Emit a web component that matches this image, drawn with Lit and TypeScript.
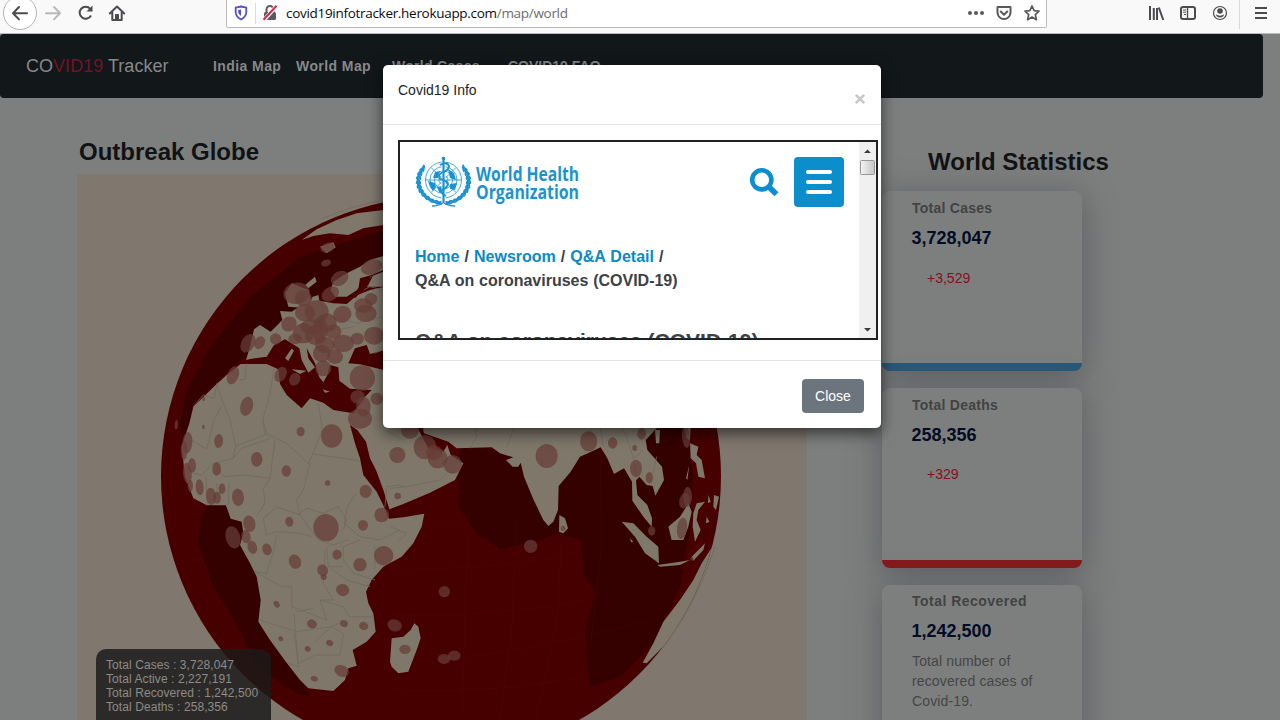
import { LitElement, html, css, svg } from "lit";
import { customElement } from "lit/decorators.js";

// Infection bubbles: cx, cy, rx, ry, rotation
const bubbles: number[][] = [
  [773, 353, 22, 14, -20], [768, 399, 15, 10, -20], [905, 411, 33, 22, -20], [809, 445, 28, 21, -30],
  [680, 490, 40, 32, -10], [700, 505, 26, 24, 0], [781, 492, 28, 20, -30], [657, 582, 24, 22, -40],
  [534, 640, 20, 30, 30], [569, 638, 15, 20, 30], [617, 627, 17, 17, 0], [489, 736, 17, 28, 20],
  [740, 545, 36, 34, 0], [705, 548, 30, 26, 0], [770, 578, 30, 28, 0], [817, 553, 28, 25, -20],
  [700, 610, 32, 30, 0], [735, 615, 30, 30, 0], [790, 605, 24, 22, 0], [888, 550, 32, 26, 0],
  [903, 507, 19, 18, 0], [880, 527, 28, 22, 0], [765, 645, 30, 24, 0], [755, 670, 26, 26, 0],
  [795, 680, 24, 22, 0], [760, 715, 24, 24, 0], [820, 640, 32, 26, 0], [862, 626, 20, 18, 0],
  [912, 617, 30, 27, 0], [750, 600, 22, 40, 0], [725, 590, 34, 22, 0], [675, 627, 20, 16, 0], [632, 733, 17, 24, 30],
  [674, 748, 16, 20, 30], [877, 744, 38, 38, 0], [530, 829, 19, 29, 15], [863, 801, 22, 20, 0],
  [920, 806, 19, 18, 0], [880, 830, 22, 30, 0], [870, 866, 36, 30, 0], [401, 807, 4, 7, 0], [400, 891, 4, 7, 0],
  [319, 884, 5, 14, 5], [785, 918, 32, 35, 0], [692, 905, 12, 14, 0], [446, 933, 13, 21, 5],
  [560, 988, 17, 22, 0], [649, 1023, 14, 17, 0], [773, 1059, 8, 8, 0], [352, 938, 15, 32, 5], [342, 962, 10, 28, 0],
  [440, 1017, 13, 20, 0], [366, 1007, 12, 22, 0], [352, 1030, 13, 32, -5], [361, 1068, 8, 18, 0], [389, 1072, 12, 24, -5],
  [423, 1099, 15, 26, -5], [441, 1103, 12, 18, 0], [456, 1076, 10, 16, 0], [504, 1102, 18, 26, -5],
  [887, 1084, 18, 20, 0], [935, 1155, 22, 22, 0], [538, 1181, 18, 25, -10],
  [658, 1175, 12, 15, -10], [768, 1193, 38, 41, -10], [879, 1186, 15, 16, 0], [489, 1222, 22, 34, -15],
  [528, 1220, 14, 20, -10], [547, 1252, 14, 20, -15], [591, 1258, 14, 18, -15], [675, 1295, 18, 22, -25],
  [801, 1274, 14, 15, -10], [870, 1304, 20, 20, 0], [941, 1277, 29, 29, 0], [758, 1321, 16, 18, -20],
  [761, 1341, 9, 9, 0], [818, 1380, 20, 18, 20], [620, 1423, 8, 11, -35], [726, 1482, 15, 13, 30],
  [822, 1481, 12, 10, 20], [881, 1488, 14, 12, 20], [632, 1526, 8, 7, 40], [713, 1557, 9, 8, 30],
  [779, 1539, 11, 9, 20], [815, 1623, 23, 17, 25], [733, 1646, 11, 8, 20],
  [974, 1486, 22, 18, 20], [1005, 1558, 17, 14, 0], [1123, 1385, 17, 17, 0], [1122, 1587, 19, 15, 0],
  [1153, 1577, 19, 15, 0], [1382, 1249, 20, 20, 0], [982, 975, 24, 24, 0], [983, 1098, 10, 10, 0],
  [1020, 900, 27, 26, 0], [1065, 952, 34, 36, 0], [1103, 985, 30, 30, 0], [1148, 1003, 28, 28, 0],
  [1092, 968, 24, 22, 0], [1430, 978, 33, 36, 0], [1556, 934, 26, 30, 0], [1628, 939, 14, 17, 0],
  [1715, 911, 13, 18, 0], [1694, 954, 7, 9, 0], [1698, 1015, 18, 26, 0], [1738, 1043, 11, 17, 0],
  [1848, 920, 12, 34, -5], [1853, 1100, 13, 30, 0], [1843, 1112, 15, 24, 15], [1836, 1195, 15, 32, 8],
  [1745, 1203, 11, 14, 0], [1479, 1195, 7, 8, 0], [1866, 1286, 5, 6, 0],
];

const borders = [
  "M440,760 L452,800 L480,870 L497,948 L592,913 L650,940 L715,1000 L728,972 L868,992",
  "M592,913 L578,870 L600,790 L612,715", "M580,870 L584,915 M745,820 L757,900 L728,972",
  "M455,828 L432,870 L410,958 L365,930 M370,830 L400,795 L432,805 L440,765 M530,700 L525,748 L508,750",
  "M497,948 L490,985 L430,1000 L395,1035 L370,1030 M430,1000 L462,1040 L520,1035 L600,1045 L615,930",
  "M490,985 L515,955 L600,925 M720,1000 L700,1080 L680,1110 L690,1155 L745,1230 L790,1245 L835,1230",
  "M600,1045 L580,1075 L585,1120 L560,1160 M475,1125 L478,1060 M408,1040 L412,1125 M440,1060 L445,1120",
  "M580,1165 L590,1215 L620,1205 L690,1210 L725,1220 M690,1155 L620,1130 L580,1165 M690,1150 L710,1135 L760,1150 L805,1130 L830,1170 L820,1200",
  "M858,1090 L832,1130 L822,1180 L870,1220 L930,1230 L990,1200 M820,1250 L870,1230 M820,1250 L820,1290 L850,1330 L915,1350 M915,1250 L915,1320",
  "M620,1215 L612,1260 L590,1330 L555,1325 L635,1370 L665,1370 L665,1430 L770,1470 L750,1410 L790,1410 L760,1360 L765,1260",
  "M770,1250 L775,1310 L818,1310 M782,1315 L830,1350 L900,1370 M750,1410 L820,1430 L838,1460 L912,1460",
  "M570,1470 L680,1505 L785,1490 L830,1470 M672,1450 L685,1610 L655,1600 M672,1510 L685,1600 L735,1575 L810,1575 L820,1510 L785,1490 M735,1535 L785,1490 M680,1445 L730,1435",
  "M912,670 L939,660 M948,900 L1000,930 M960,1075 L1010,1070 L1110,1050 L1140,1020 M1005,1070 L985,1065 L950,1070 L945,1130",
  "M960,1190 L1010,1210 L985,1235 M1210,870 L1220,920 L1200,955 M1310,950 L1330,900 L1340,870",
  "M1590,890 L1600,950 M1655,890 L1670,920 L1690,985 L1720,960 M1690,985 L1700,1050 M1760,980 L1750,1030",
  "M798,560 L860,580 L939,560 M800,600 L850,590 M880,480 L900,470 L939,480",
];

@customElement("outbreak-globe")
export class OutbreakGlobe extends LitElement {
  static styles = css`
    :host { display: block; width: 730px; height: 546px; background: #80776e; overflow: hidden; }
    svg { display: block; }
    .land { fill: #7e776a; }
    .sea { fill: #470000; }
    .deep { fill: #350000; }
    .border { fill: none; stroke: #6f685d; stroke-width: 2.2; stroke-linejoin: round; }
    .bubble { fill: #673d38; fill-opacity: 0.72; }
    .grid { fill: none; stroke: #5a0d0a; stroke-width: 2; opacity: 0.35; }
  `;
  render() {
    return html`<svg width="730" height="546" viewBox="21 132 2190 1638">
      <defs>
        <clipPath id="disc"><circle cx="1113" cy="1039" r="840" /></clipPath>
        <filter id="rough" x="-5%" y="-5%" width="110%" height="110%">
          <feTurbulence type="fractalNoise" baseFrequency="0.05" numOctaves="1" seed="4" result="n" />
          <feDisplacementMap in="SourceGraphic" in2="n" scale="5" xChannelSelector="R" yChannelSelector="G" />
        </filter>
      </defs>
      <circle class="sea" cx="1113" cy="1039" r="840" />
      <g clip-path="url(#disc)">
        <path class="deep" d="M390,1170 L415,1125 L470,1120 L530,1200 L580,1400 L580,1490 L700,1650 L720,1700 L680,1690 L560,1610 L510,1500 L430,1370 L385,1240Z" />
        <path class="deep" d="M330,880 L350,780 L420,650 L540,500 L690,380 L940,300 L940,460 L830,430 L650,560 L480,720 L370,820 L340,960Z" />
        <path class="deep" d="M1170,950 L1165,1130 L1220,1210 L1290,1257 L1400,1235 L1460,1210 L1535,1230 L1540,1330 L1575,1390 L1545,1500 L1560,1670 L1650,1640 L1760,1530 L1830,1370 L1860,1200 L1870,1050 L1850,880 L1500,900 L1300,960Z" />
        <path class="grid" d="M960,1182 H1200 M960,1325 L1360,1300 L1540,1265 M960,1455 Q1300,1460 1560,1408 M1000,1590 Q1300,1590 1740,1470 M960,1680 Q1300,1690 1540,1640 M1195,1150 L1190,1330 L1175,1750 M1340,1180 L1325,1500 L1290,1770 M1475,1230 L1460,1480 L1400,1760 M1590,900 L1595,1250 L1560,1560" />
        <g filter="url(#rough)">
          <path class="land" fill-rule="evenodd" d="M528,690 L540,650 L552,598 L570,585 L602,605 L637,570 L630,543 L665,545 L690,528 L720,515 L728,500 L745,495 L748,512 L790,520 L830,522 L862,495 L900,480 L945,470 L1100,400 L1750,500 L1790,700 L1760,895 L1727,930 L1732,960 L1776,1010 L1782,1050 L1756,1097 L1748,1068 L1730,1065 L1708,1040 L1698,1052 L1702,1095 L1732,1125 L1746,1165 L1745,1190 L1720,1160 L1687,1112 L1686,1055 L1662,1015 L1632,1032 L1612,985 L1592,952 L1562,966 L1530,980 L1502,1025 L1466,1068 L1464,1140 L1450,1175 L1435,1188 L1420,1170 L1390,1108 L1362,1040 L1352,998 L1345,1010 L1328,1010 L1308,990 L1330,982 L1290,970 L1265,952 L1160,955 L1135,935 L1062,910 L1055,875 L1035,880 L1075,955 L1120,965 L1132,945 L1142,975 L1180,1000 L1155,1050 L1080,1088 L1000,1122 L958,1138 L940,1080 L918,1020 L900,985 L888,935 L862,900 L840,885 L855,940 L870,985 L880,1035 L920,1085 L942,1130 L957,1166 L1000,1162 L1063,1151 L1055,1190 L1030,1240 L995,1280 L940,1310 L905,1350 L888,1385 L895,1420 L910,1450 L917,1505 L890,1535 L848,1560 L860,1607 L835,1615 L825,1650 L790,1683 L715,1675 L690,1650 L645,1592 L600,1530 L565,1475 L572,1410 L560,1340 L540,1300 L510,1245 L520,1210 L515,1175 L482,1166 L468,1126 L410,1126 L370,1105 L345,1040 L335,950 L358,880 L370,830 L440,762 L470,735 L512,702 L590,702 L625,718 L630,762 L650,795 L695,835 L720,805 L760,818 L790,840 L850,850 L885,800 L905,780 L840,776 L808,752 L805,712 L780,705 L772,735 L760,757 L748,742 L735,700 L710,655 L715,685 L735,712 L715,728 L695,690 L688,655 L645,628 L612,645 L590,680 L545,686Z
            M835,700 L855,655 L890,645 L900,672 L945,660 L1000,690 L1000,735 L920,715 L870,703Z" />
          <path class="land" d="M695,330 L740,298 L800,270 L860,250 L940,240 L940,285 L880,295 L835,315 L780,310 L730,318Z" />
          <path class="land" d="M790,455 L830,430 L870,410 L900,390 L940,378 L940,420 L905,435 L870,445 L865,478 L830,500 L795,500 L782,480Z M890,470 L900,440 L940,425 L940,470Z" />
          <path class="land" d="M750,350 L790,337 L797,352 L770,370Z M705,465 L735,440 L740,455 L715,475Z M645,490 L665,460 L715,480 L725,520 L695,533 L655,530Z M645,685 L665,655 L672,662 L655,693Z M665,718 L710,722 L690,732Z M758,778 L780,785 L765,788Z M895,650 L939,645 L939,660 L905,668Z" />
          <path class="land" d="M965,1525 L1000,1520 L1022,1500 L1033,1480 L1045,1490 L1052,1525 L1040,1560 L1015,1625 L985,1630 L965,1610 L960,1595Z" />
          <path class="land" d="M1468,1155 L1485,1165 L1494,1195 L1480,1210 L1467,1205Z" />
          <path class="land" d="M1655,1175 L1690,1180 L1730,1220 L1765,1250 L1767,1300 L1725,1270 L1695,1220Z M1762,1305 L1800,1300 L1830,1295 L1860,1290 L1830,1305 L1770,1310Z M1795,1190 L1830,1160 L1855,1120 L1865,1145 L1855,1190 L1840,1230 L1805,1230Z M1870,1150 L1880,1120 L1905,1115 L1885,1140 L1880,1170 L1892,1200 L1875,1235 L1868,1190Z M1840,890 L1862,890 L1860,930 L1850,925Z M1860,940 L1885,950 L1880,975 L1895,990 L1905,1045 L1885,1040 L1878,1000 L1862,985Z M1858,1005 L1852,1050 L1848,1045Z M1910,1160 L1918,1175 L1908,1180Z M1755,900 L1770,900 L1768,940 L1758,940Z M1915,1095 L1922,1115 L1914,1120Z M1932,1095 L1947,1100 L1938,1140 L1930,1130Z M1865,1280 L1905,1240 L1900,1260 L1870,1292Z M1680,1225 L1690,1235 L1683,1237Z" />
          <path class="land" d="M1718,1598 L1750,1540 L1780,1475 L1830,1410 L1870,1350 L1895,1300 L1930,1245 L1960,1200 L1960,1300 L1790,1540 L1730,1600Z" />
        </g>
        ${borders.map((d) => svg`<path class="border" d=${d} />`)}
        <path class="sea" d="M650,640 L670,650 L650,672Z M868,470 L910,435 L895,465 L870,490 L855,505 L850,495Z" />
      </g>
      <path class="border" d="M760,265 Q850,225 945,210 M1790,1540 Q1890,1400 1935,1250" />
      ${bubbles.map(([x, y, rx, ry, a]) => svg`<ellipse class="bubble" cx=${x} cy=${y} rx=${rx} ry=${ry} transform="rotate(${a} ${x} ${y})" />`)}
    </svg>`;
  }
}

@customElement("app-root")
export class AppRoot extends LitElement {
  static styles = css`
    :host { display: block; width: 1280px; height: 720px; overflow: hidden; position: relative; font-family: "Liberation Sans", Arial, sans-serif; font-size: 14px; color: #101214; background: #7d7f7e; }
    * { box-sizing: border-box; }
    svg { display: block; flex: none; }
    .chrome { display: flex; height: 34px; background: #f9f9fa; border-bottom: 1px solid #b9bab9; overflow: hidden; }
    .tools { width: 226px; }
    .address { width: 821px; height: 28px; flex: none; background: #fff; border: 1px solid #bcbcbd; border-top: 0; border-radius: 0 0 2px 2px; display: flex; }
    .lead { width: 59px; }
    .url { flex: 1; font: 13.5px/27px "Open Sans", "Noto Sans", sans-serif; letter-spacing: -0.3px; color: #0c0c0d; white-space: nowrap; }
    .path { color: #6b6b70; }
    .page { height: 686px; overflow: hidden; }
    .nav { width: 1263px; height: 64px; background: #12171a; border-radius: 4px; display: flex; align-items: center; padding-left: 26px; color: #86888a; }
    .brand { font-size: 18px; width: 187px; white-space: nowrap; letter-spacing: 0.03px; }
    .brand span { color: #6f1526; }
    .links { display: flex; font-weight: bold; font-size: 14px; line-height: 16px; letter-spacing: 0.42px; white-space: nowrap; padding-bottom: 1px; }
    .links a:nth-child(1) { width: 83px; }
    .links a:nth-child(2) { width: 96px; }
    .links a:nth-child(3) { width: 116px; letter-spacing: 0.3px; }
    .links a:nth-child(4) { letter-spacing: 0; }
    .content { display: flex; }
    .left { width: 882px; padding: 38px 0 0 77px; flex: none; }
    h2 { margin: 0; font-size: 24px; line-height: 32px; white-space: nowrap; }
    .left h2 { padding-left: 2px; margin-bottom: 6px; }
    .right { padding-top: 48px; }
    .right h2 { padding-left: 46px; margin-bottom: 13px; }
    .cards { display: flex; flex-direction: column; gap: 17px; }
    .card { width: 200px; height: 180px; border-radius: 8px; background: #7d7f7e; padding: 8px 30px 0; border-bottom: 8px solid #285978; box-shadow: 0 5px 32px rgba(84, 86, 92, 0.85); }
    .card.deaths { border-color: #85191b; }
    .card.recovered { padding-top: 7px; }
    .name { font-weight: bold; font-size: 14px; line-height: 18px; letter-spacing: 0.25px; color: #414343; white-space: nowrap; }
    .recovered .name { letter-spacing: 0.48px; }
    .count { font-weight: bold; font-size: 18px; line-height: 24px; margin: 9px 0 0 -0.5px; color: #020d25; }
    .delta { color: #85101d; line-height: 20px; margin: 18px 0 0 15px; }
    .deaths .delta { margin-top: 17px; }
    .note { color: #444646; line-height: 20px; margin: 8px -15px 0 0; letter-spacing: 0.13px; }
    .totals { position: absolute; left: 96px; top: 649px; width: 175px; height: 80px; border-radius: 10px; background: rgba(26, 26, 25, 0.82); padding: 9px 10px; font-size: 12px; letter-spacing: 0.08px; line-height: 14px; color: #8d8b87; white-space: nowrap; }
    .modal { position: absolute; left: 383px; top: 65px; width: 498px; height: 363px; background: #fff; border-radius: 5px; box-shadow: 0 5px 15px rgba(0, 0, 0, 0.6); display: flex; flex-direction: column; }
    .head { height: 60px; flex: none; border-bottom: 1px solid #e2e3e4; padding: 15px 15px 0; display: flex; justify-content: space-between; line-height: 20px; color: #212529; }
    .x { margin-top: 13px; }
    .body { padding: 15px; height: 235px; flex: none; }
    .frame { width: 480px; height: 200px; border: 2px solid #1f2123; display: flex; overflow: hidden; }
    .doc { flex: 1; min-width: 0; padding: 15px 15px 0 15px; overflow: hidden; color: #3c4245; font-weight: bold; }
    .brandrow { display: flex; align-items: center; height: 50px; }
    .search { margin-left: auto; margin-right: 15px; }
    .menu { width: 50px; height: 50px; border-radius: 4px; background: #0b8ecb; }
    .crumbs { margin-top: 38px; font-size: 16px; line-height: 24px; white-space: nowrap; word-spacing: 0.6px; }
    .crumbs span { word-spacing: 0.3px; }
    .crumbs a { color: #0b8ac4; }
    .title { margin-top: 33px; font-size: 21px; line-height: 30px; white-space: nowrap; }
    .bar { width: 17px; background: #f0f0f0; }
    .foot { border-top: 1px solid #e2e3e4; flex: 1; padding: 18px 17px 0; display: flex; justify-content: flex-end; }
    .close { width: 62px; height: 34px; background: #6c757d; border-radius: 4px; color: #fff; text-align: center; line-height: 34px; }
  `;

  private chrome() {
    return html`<div class="chrome">
      <svg class="tools" width="226" height="33" fill="none" stroke="#4c4c4e" stroke-width="2">
        <circle cx="20" cy="13" r="16.5" fill="#fff" stroke="#b5b5b6" stroke-width="1" />
        <path d="M13,13.2 H27 M19,7 L13,13.2 L19,19.4" stroke-linecap="round" stroke-linejoin="round" />
        <path d="M46,13.2 H60 M54,7 L60,13.2 L54,19.4" stroke="#b9b9ba" stroke-linecap="round" stroke-linejoin="round" />
        <path d="M90.2,8.8 A6,6 0 1 0 91,15.5" /><path d="M92.5,5.5 V11.5 H86.5Z" fill="#4c4c4e" stroke="none" />
        <path d="M109.8,13.5 L117,6.5 L124.2,13.5 M112.3,12.5 V20 H121.7 V12.5" stroke-linecap="round" stroke-linejoin="round" /><path d="M115.5,20 V14.5 H118.5 V20" fill="#4c4c4e" stroke-width="1" />
      </svg>
      <div class="address">
        <svg class="lead" width="59" height="27" fill="none">
          <path d="M14,6.5 L19.3,7.7 V12.5 Q18.8,17 14,19.5 Q9.2,17 8.7,12.5 V7.7Z" stroke="#5450c4" stroke-width="1.8" stroke-linejoin="round" />
          <path d="M14,9.5 V16 Q11.3,14.5 11.2,12.3 V10Z" fill="#5450c4" />
          <path d="M28.5,3 V24" stroke="#dcdcdd" />
          <rect x="37" y="12" width="12" height="8" rx="1.5" fill="#5b5b5d" /><path d="M39.5,12 V9.5 A3.5,3.5 0 0 1 46.5,9.5 V12" stroke="#5b5b5d" stroke-width="2" />
          <path d="M36.5,20.5 L49.5,6" stroke="#fff" stroke-width="4" /><path d="M36.5,19.8 L49.5,5.8" stroke="#d7264c" stroke-width="2" />
        </svg>
        <div class="url">covid19infotracker.herokuapp.com<span class="path">/map/world</span></div>
        <svg width="90" height="27" viewBox="956 0 90 27" fill="none" stroke="#5a5a5c" stroke-width="2">
          <g fill="#5a5a5c" stroke="none"><circle cx="970" cy="13" r="2" /><circle cx="976" cy="13" r="2" /><circle cx="982" cy="13" r="2" /></g>
          <path d="M997.5,7 H1010.5 V12.5 A6.5,6.5 0 0 1 997.5,12.5Z M1000.7,11.5 L1004,14.8 L1007.3,11.5" stroke-linejoin="round" stroke-linecap="round" />
          <path d="M1032,6 L1034.1,10.7 L1039,11.2 L1035.3,14.6 L1036.4,19.7 L1032,17.1 L1027.6,19.7 L1028.7,14.6 L1025,11.2 L1029.9,10.7Z" stroke-width="1.7" stroke-linejoin="round" />
        </svg>
      </div>
      <svg width="233" height="33" viewBox="1047 0 233 33" fill="none" stroke="#4c4c4e" stroke-width="2">
        <path d="M1150,6 V20 M1153.8,8 V20 M1157,8 V20" /><path d="M1158.8,7.5 L1163.3,20" />
        <rect x="1181" y="7" width="14" height="12" rx="2" /><path d="M1187.5,7 V19" stroke-width="1.4" /><path d="M1183,10 H1186 M1183,12.2 H1186 M1184,14.5 H1186" stroke-width="1" />
        <circle cx="1220" cy="13" r="6.5" stroke-width="1.2" /><circle cx="1220" cy="11" r="2.8" fill="#4c4c4e" stroke="none" /><path d="M1215.7,14.3 Q1220,17 1224.3,14.3 Q1223.2,17.6 1220,17.6 Q1216.8,17.6 1215.7,14.3Z" fill="#4c4c4e" stroke="none" />
        <path d="M1239.5,0 V29" stroke="#d8d8d9" stroke-width="1" />
        <path d="M1255,8 H1267 M1255,13 H1267 M1255,18 H1267" />
      </svg>
    </div>`;
  }

  private emblem() {
    const leaves = [];
    for (let i = 0; i < 11; i++) {
      const deg = 100 + i * 11.5;
      const a = (deg * Math.PI) / 180;
      const x = 24.5 * Math.cos(a);
      const y = 22 * Math.sin(a);
      for (const s of [1, -1]) {
        leaves.push(svg`<ellipse cx=${28.5 + s * x} cy=${25 + y} rx="3.8" ry="1.3" transform="rotate(${s * (deg + 62)} ${28.5 + s * x} ${25 + y})" />
          <ellipse cx=${28.5 + s * x * 1.06} cy=${25 + y} rx="3.5" ry="1.1" transform="rotate(${s * (deg + 112)} ${28.5 + s * x * 1.06} ${25 + y})" />`);
      }
    }
    return html`<svg width="166" height="52" viewBox="0 0 166 52" fill="#1b93cf">
      <g>${leaves}</g>
      <g fill="none" stroke="#1b93cf" stroke-width="0.8">
        <circle cx="28.5" cy="24" r="18" /><circle cx="28.5" cy="24" r="13.5" /><circle cx="28.5" cy="24" r="9" /><circle cx="28.5" cy="24" r="4.5" />
        <path d="M10.5,24 H46.5 M16,11.5 L41,36.5 M41,11.5 L16,36.5" />
        <path d="M17,50 Q24,50 28.5,46.5 Q33,50 40,50" stroke-width="1.4" />
      </g>
      <path d="M13,25 L20,27 L21,31 L18,35 L15,31Z M20,16 L25,15 L23,22 L18,22Z M33,13 L39,17 L41,24 L35,22Z M35,28 L42,27 L40,34 L35,33Z M22,31 L27,30 L27,38 L24,36Z" />
      <path d="M28.5,1 V47" stroke="#fff" stroke-width="4" /><path d="M28.5,1 V47" stroke="#1b93cf" stroke-width="2.2" /><circle cx="28.5" cy="2.5" r="1.8" />
      <path d="M25,9 Q32,5 34,10 Q34,14 28,16 Q22,19 25,23 Q33,25 33,28 Q32,32 27,34 Q25,37 31,40" fill="none" stroke="#1b93cf" stroke-width="1.9" />
      <g font-family="Open Sans, Noto Sans, sans-serif" font-weight="700" font-size="19.5">
        <text x="61" y="24.5" textLength="103" lengthAdjust="spacingAndGlyphs">World Health</text>
        <text x="61" y="42.5" textLength="103" lengthAdjust="spacingAndGlyphs">Organization</text>
      </g>
    </svg>`;
  }

  render() {
    return html`
      ${this.chrome()}
      <div class="page">
        <div class="nav">
          <div class="brand">CO<span>VID19</span> Tracker</div>
          <div class="links"><a>India Map</a><a>World Map</a><a>World Cases</a><a>COVID19 FAQ</a></div>
        </div>
        <div class="content">
          <div class="left"><h2>Outbreak Globe</h2><outbreak-globe></outbreak-globe></div>
          <div class="right">
            <h2>World Statistics</h2>
            <div class="cards">
              <div class="card"><div class="name">Total Cases</div><div class="count">3,728,047</div><div class="delta">+3,529</div></div>
              <div class="card deaths"><div class="name">Total Deaths</div><div class="count">258,356</div><div class="delta">+329</div></div>
              <div class="card recovered"><div class="name">Total Recovered</div><div class="count">1,242,500</div><div class="note">Total number of recovered cases of Covid-19.</div></div>
            </div>
          </div>
        </div>
      </div>
      <div class="totals">Total Cases : 3,728,047<br />Total Active : 2,227,191<br />Total Recovered : 1,242,500<br />Total Deaths : 258,356</div>
      <div class="modal">
        <div class="head"><span>Covid19 Info</span>
          <svg class="x" width="12" height="12" viewBox="0 0 12 12"><path d="M1.8,1.8 L10.2,10.2 M10.2,1.8 L1.8,10.2" stroke="#c6c7c8" stroke-width="2.6" /></svg>
        </div>
        <div class="body">
          <div class="frame">
            <div class="doc">
              <div class="brandrow">
                ${this.emblem()}
                <svg class="search" width="30" height="30" viewBox="0 0 30 30" fill="none" stroke="#0b8ecb"><circle cx="12.8" cy="12.8" r="9.6" stroke-width="4.6" /><path d="M19.5,19.5 L27.5,27.3" stroke-width="5.6" /></svg>
                <svg class="menu" viewBox="0 0 50 50" stroke="#fff" stroke-width="4" stroke-linecap="round"><path d="M14,15 H36 M14,25 H36 M14,35 H36" /></svg>
              </div>
              <div class="crumbs"><a>Home</a> / <a>Newsroom</a> / <a>Q&amp;A Detail</a> /<br /><span>Q&amp;A on coronaviruses (COVID-19)</span></div>
              <div class="title">Q&amp;A on coronaviruses (COVID-19)</div>
            </div>
            <svg class="bar" width="17" height="196">
              <defs><linearGradient id="thumb"><stop offset="0" stop-color="#f4f4f4" /><stop offset="1" stop-color="#c4c4c6" /></linearGradient></defs>
              <path d="M5,11 L8.5,7.5 L12,11Z M5,186 L8.5,189.5 L12,186Z" fill="#3c3c3c" />
              <rect x="1.5" y="18.5" width="14" height="14" rx="1" fill="url(#thumb)" stroke="#979797" />
            </svg>
          </div>
        </div>
        <div class="foot"><div class="close">Close</div></div>
      </div>`;
  }
}
